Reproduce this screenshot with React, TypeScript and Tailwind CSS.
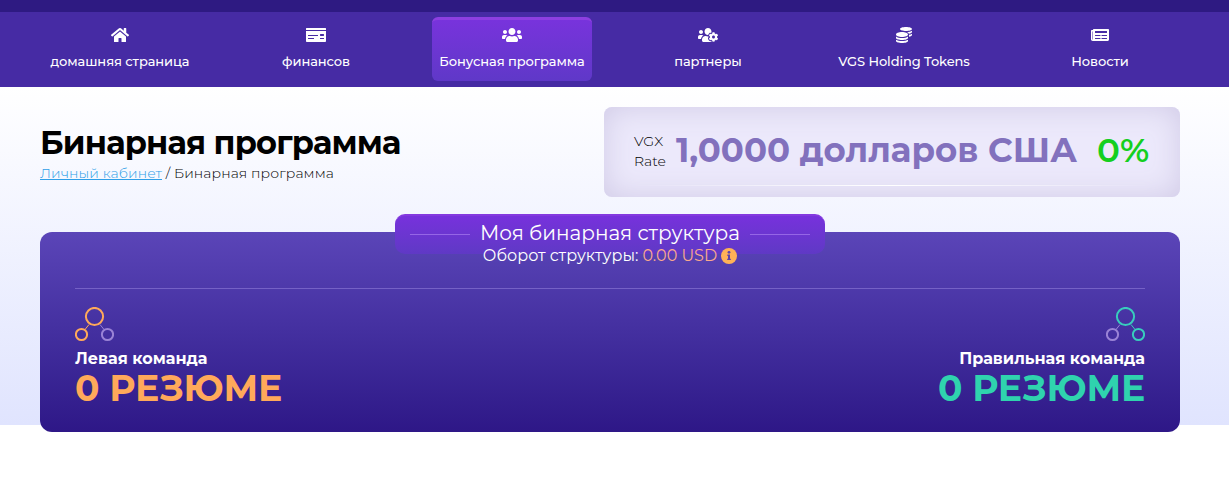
import type { ReactNode } from 'react';
import { FaCoins, FaHome, FaMoneyCheck, FaNewspaper, FaUsers, FaUsersCog } from 'react-icons/fa';
import { clsx } from 'clsx';

const NAV = [
  { label: 'домашняя страница', icon: FaHome, iconClass: 'w-[18px]' },
  { label: 'финансов', icon: FaMoneyCheck, iconClass: 'w-5' },
  { label: 'Бонусная программа', icon: FaUsers, iconClass: 'w-5', active: true },
  { label: 'партнеры', icon: FaUsersCog, iconClass: 'w-5' },
  { label: 'VGS Holding Tokens', icon: FaCoins, iconClass: 'w-4' },
  { label: 'Новости', icon: FaNewspaper, iconClass: 'w-[18px]' },
];

function NavBar() {
  return (
    <nav className="h-[75px] bg-[#462ba4] pt-[5px]">
      <div className="ml-10 flex w-[1140px] justify-between">
        {NAV.map(({ label, icon: Icon, iconClass, active }) => (
          <a
            key={label}
            href="#"
            className={clsx(
              'flex h-16 w-40 flex-col items-center rounded-md pt-2.5 text-[13px] font-medium tracking-[-0.006em] whitespace-nowrap text-white',
              active && 'border-t-3 border-[#8d3fe0] bg-linear-to-b from-[#7833dc] to-[#5f38c8] pt-[7px]!'
            )}
          >
            <Icon className={clsx('h-4 shrink-0', iconClass)} />
            <span className="mt-2 leading-5">{label}</span>
          </a>
        ))}
      </div>
    </nav>
  );
}

function RateCard() {
  return (
    <div className="mt-5 flex h-[90px] w-[576px] flex-col rounded-lg bg-[#ece9fb] px-[30px] shadow-[inset_0_0_30px_#d0cae6]">
      <div className="flex h-[78px] items-center pt-2.5 whitespace-nowrap">
        <div className="w-[42px] text-sm leading-5 font-light text-black">
          VGX
          <br />
          Rate
        </div>
        <div className="mb-0.5 w-[421px] text-[34px] leading-10 font-bold text-[#8271bd]">1,0000 долларов США</div>
        <div className="mb-0.5 text-[34px] leading-10 font-semibold text-[#14cf20]">0%</div>
      </div>
      <div className="h-px bg-linear-to-r from-transparent via-white to-transparent" />
    </div>
  );
}

function TreeIcon({ left, right, main }: { left: string; right: string; main: string }) {
  return (
    <svg width="39" height="35" viewBox="0 0 39 35" fill="none" strokeWidth="2">
      <path d="M14 17.5 10 22.5" stroke={left} strokeWidth="1" />
      <path d="M25 17.5 29 22.5" stroke={right} strokeWidth="1" />
      <circle cx="19.5" cy="9.5" r="8.6" stroke={main} />
      <circle cx="6.5" cy="27.5" r="5.6" stroke={left} />
      <circle cx="32.5" cy="27.5" r="5.6" stroke={right} />
    </svg>
  );
}

function Team({ icon, name, value, className }: { icon: ReactNode; name: string; value: string; className: string }) {
  return (
    <div className={clsx('flex flex-col whitespace-nowrap', className)}>
      {icon}
      <div className="mt-[7px] text-base leading-5 font-bold text-white">{name}</div>
      <div className="text-[36px] leading-[38px] font-bold tracking-[-0.15px]">{value}</div>
    </div>
  );
}

function StructureCard() {
  return (
    <section className="relative mt-[35px] h-[200px] rounded-xl bg-linear-to-b from-[#5b45b8] to-[#2e1787] px-[35px]">
      <div className="absolute -top-[18px] left-[355px] flex h-10 w-[430px] items-start justify-between rounded-[10px] border-t-2 border-[#8439df] bg-linear-to-b from-[#7731dc] to-[#5f39c5] px-[15px] pt-[3px]">
        <span className="mt-[15px] h-px w-[60px] bg-[#9566e6]" />
        <h2 className="text-xl leading-7 whitespace-nowrap text-white">Моя бинарная структура</h2>
        <span className="mt-[15px] h-px w-[60px] bg-[#9566e6]" />
      </div>
      <div className="relative flex h-14 items-center justify-center pt-[3px] pb-[11px] text-base whitespace-nowrap text-white">
        <span>Оборот структуры:</span>
        <span className="ml-1 text-[#fba98d]">0.00 USD</span>
        <svg className="ml-1" width="16" height="16" viewBox="0 0 16 16">
          <circle cx="8" cy="8" r="8" fill="#ffb257" />
          <circle cx="8" cy="4.3" r="1.4" fill="#5b42ad" />
          <path d="M6.3 6.6H9v4.2h.8v1.3H6.2v-1.3H7V7.9h-.7z" fill="#5b42ad" />
        </svg>
      </div>
      <div className="h-px bg-[#7561c6]" />
      <div className="flex justify-between pt-[18px]">
        <Team
          className="items-start text-[#ffa95a]"
          icon={<TreeIcon main="#ffa95a" left="#ffa95a" right="#9a83d6" />}
          name="Левая команда"
          value="0 РЕЗЮМЕ"
        />
        <Team
          className="items-end text-[#2fd3ae]"
          icon={<TreeIcon main="#38cdbd" left="#9a83d6" right="#38cdbd" />}
          name="Правильная команда"
          value="0 РЕЗЮМЕ"
        />
      </div>
    </section>
  );
}

export default function App() {
  return (
    <div className="h-[503px] overflow-hidden bg-white font-[Montserrat,Inter,sans-serif]">
      <div className="h-3 bg-[#2e1a82]" />
      <NavBar />
      <main className="h-[338px] bg-linear-to-b from-white to-[#e0e4fe]">
        <div className="ml-10 w-[1140px]">
          <div className="flex justify-between">
            <header className="pt-9 whitespace-nowrap text-black">
              <h1 className="text-[32px] leading-10 font-bold tracking-[-0.8px]">Бинарная программа</h1>
              <p className="text-sm leading-5 font-light tracking-[0.1px]">
                <a href="#" className="text-[#2f9fe8] underline">Личный кабинет</a> / Бинарная программа
              </p>
            </header>
            <RateCard />
          </div>
          <StructureCard />
        </div>
      </main>
    </div>
  );
}
